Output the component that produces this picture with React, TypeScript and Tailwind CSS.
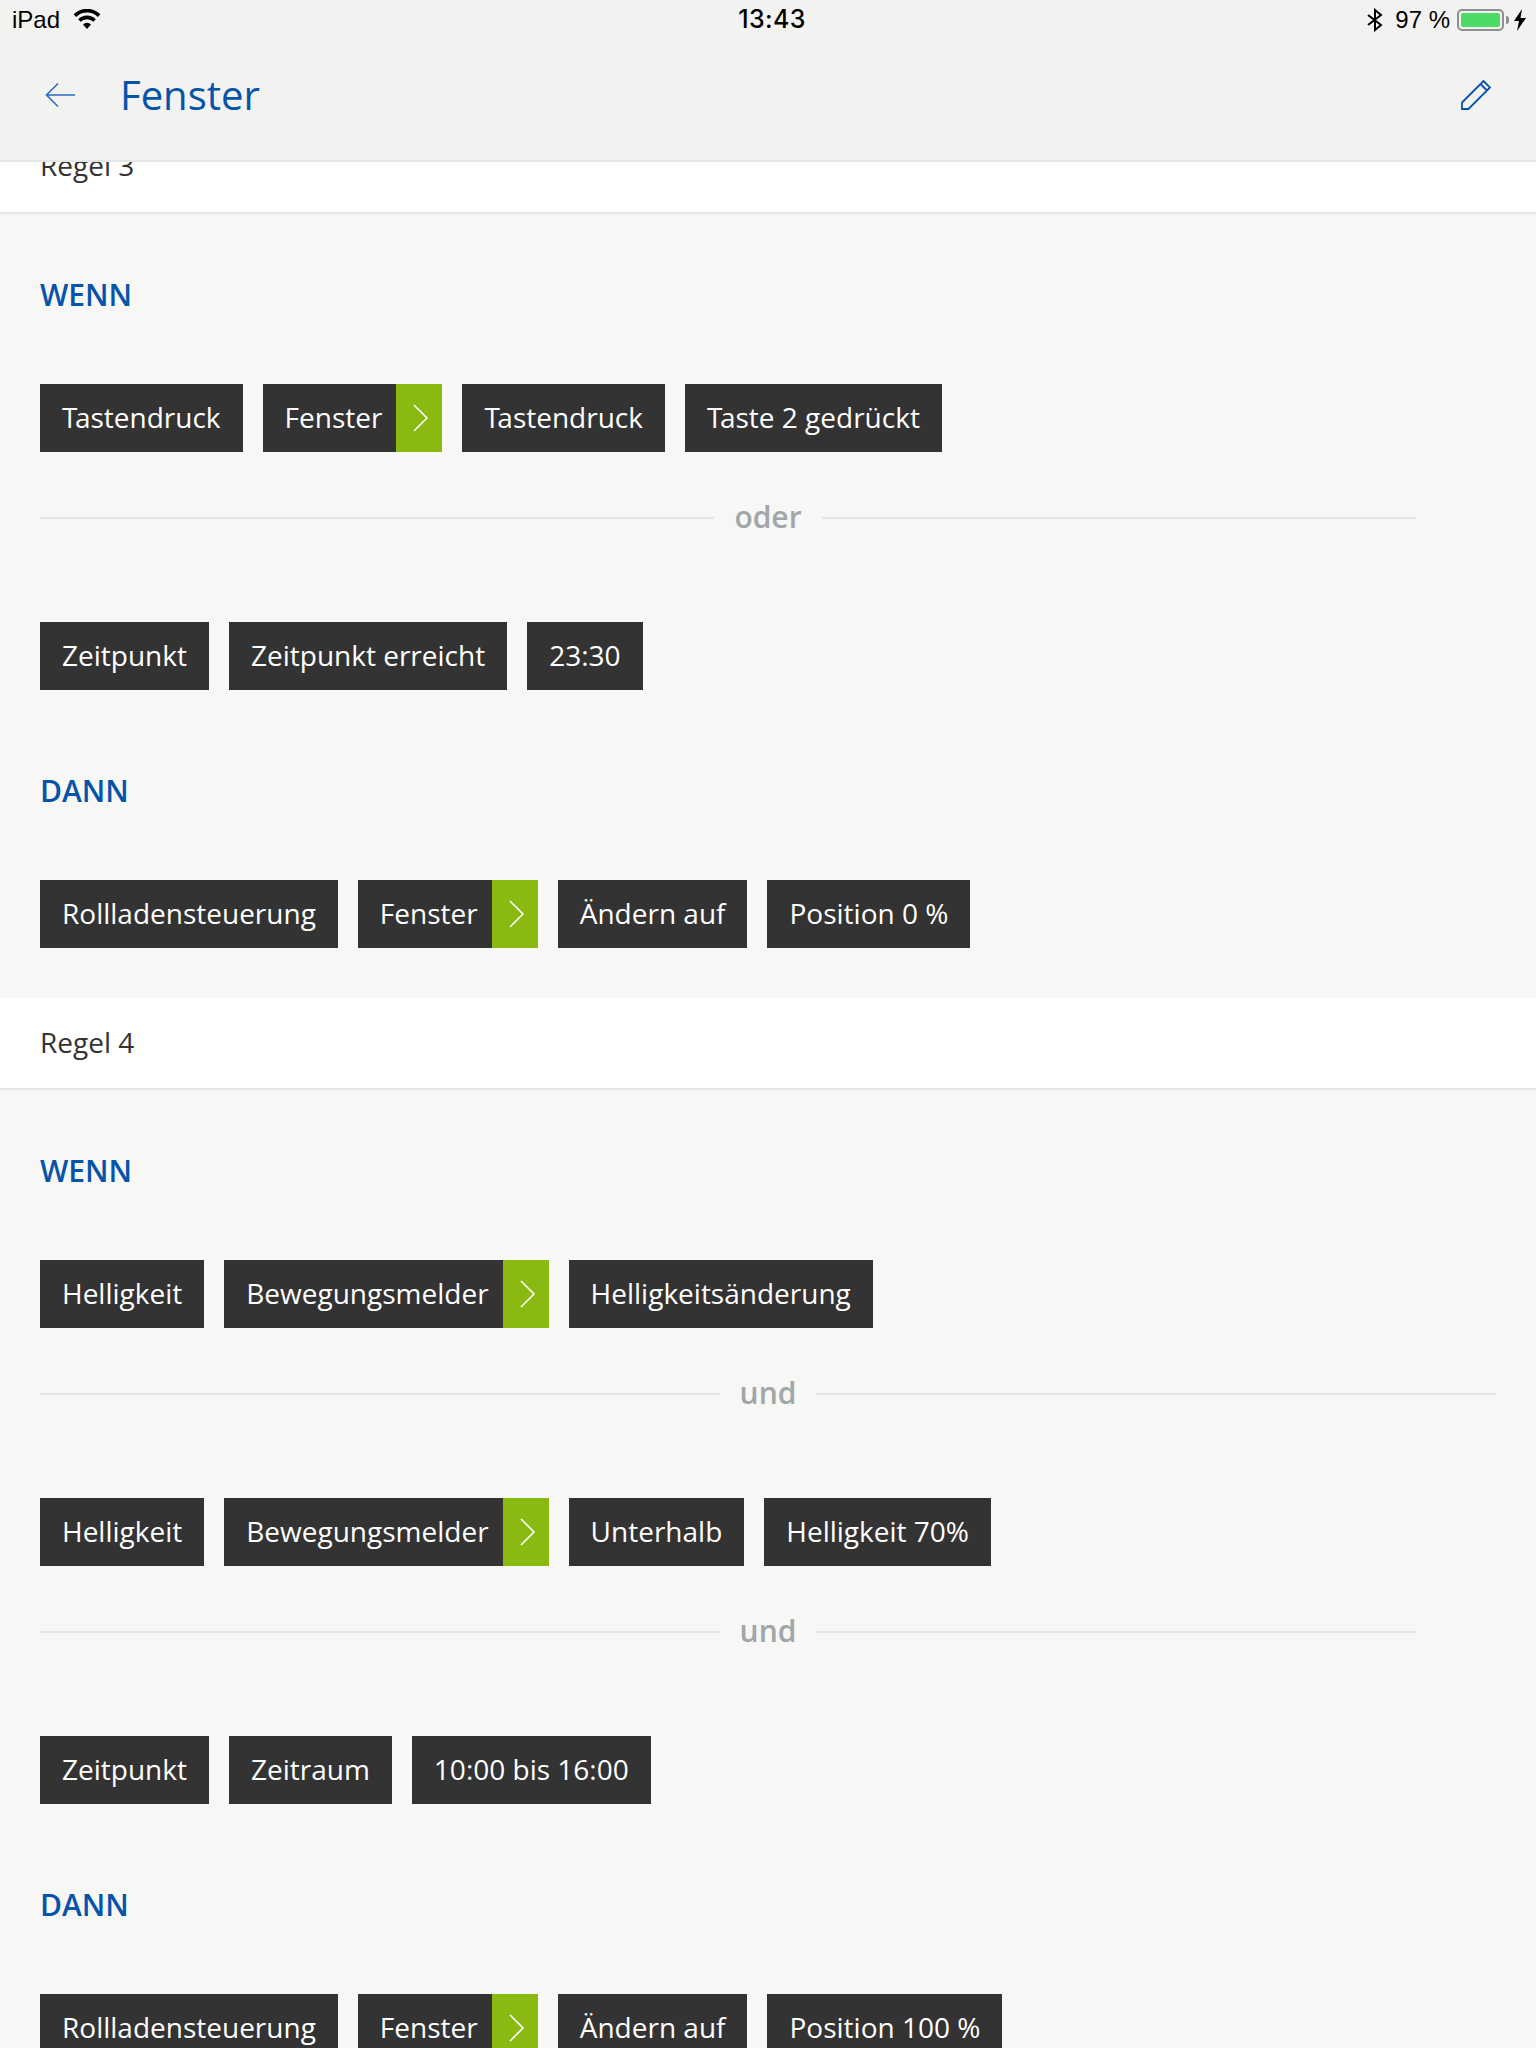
type ChipData = { label: string; arrow?: boolean };

// the installed font has no T-a kerning, so tighten the T by hand
function ChipLabel({ label }: { label: string }) {
  if (!label.startsWith('Ta')) return <>{label}</>;
  return (
    <>
      <span className="tracking-[-2.5px]">T</span>
      {label.slice(1)}
    </>
  );
}

function Chip({ label, arrow }: ChipData) {
  return (
    <div className="flex h-[68px] items-stretch bg-[#333333] text-[28px] text-white">
      <span className={arrow ? 'flex items-center pb-[2px] pl-[22px] pr-[14px]' : 'flex items-center px-[22px] pb-[2px]'}>
        <span>
          <ChipLabel label={label} />
        </span>
      </span>
      {arrow && (
        <span className="flex w-[46px] items-center bg-[#8aba12] pl-[17px]">
          <svg width="16" height="28" viewBox="0 0 16 28" fill="none" stroke="white" strokeWidth="1.6">
            <path d="M1 1l13 13L1 27" />
          </svg>
        </span>
      )}
    </div>
  );
}

function ChipRow({ chips, className }: { chips: ChipData[]; className: string }) {
  return (
    <div className={`flex gap-5 ${className}`}>
      {chips.map((c, i) => (
        <Chip key={i} {...c} />
      ))}
    </div>
  );
}

function Divider({ label, short, className }: { label: string; short?: boolean; className: string }) {
  return (
    <div className={`grid grid-cols-[1fr_auto_1fr] items-center gap-5 ${className}`}>
      <div className="mt-0.5 h-0.5 bg-[#e6e6e4]" />
      <span className="text-[30px] leading-[40px] font-semibold text-[#a1a6a9]">{label}</span>
      <div className={short ? 'mr-20 mt-0.5 h-0.5 bg-[#e6e6e4]' : 'mt-0.5 h-0.5 bg-[#e6e6e4]'} />
    </div>
  );
}

function Heading({ children, className }: { children: string; className: string }) {
  return <h3 className={`text-[30px] leading-[40px] font-semibold text-[#0653aa] ${className}`}>{children}</h3>;
}

function RuleHeader({ title }: { title: string }) {
  return (
    <div className="flex h-[92px] shrink-0 items-center border-b-2 border-[#e6e6e4] bg-white px-10 pb-[2px] text-[28px] text-[#333333]">
      {title}
    </div>
  );
}

export default function App() {
  return (
    <div className="flex h-[2048px] w-[1536px] flex-col overflow-hidden bg-[#f7f7f5] font-['Open_Sans',sans-serif]">
      <header className="h-[162px] shrink-0 border-b-2 border-[#e6e6e4] bg-[#f2f2f0]">
        <div className="grid h-10 grid-cols-[1fr_auto_1fr] items-center pl-3 pr-[10px] font-['Liberation_Sans',sans-serif] text-[24px] text-black">
          <div className="flex items-center gap-[13px]">
            <span className="text-[24px]">iPad</span>
            <svg width="28" height="22" viewBox="0 0 28 22" fill="black">
              <path d="M14 20l-4-4.500a5.600 5.600 0 0 1 8 0z" />
              <path d="M7.600 12.800l-2.400-2.600a12.400 12.400 0 0 1 17.600 0l-2.400 2.600a9 9 0 0 0-12.800 0z" />
              <path d="M3.200 8L.6 5.300a19 19 0 0 1 26.800 0L24.800 8a15.400 15.400 0 0 0-21.600 0z" />
            </svg>
          </div>
          <span className="ml-[6px] font-['Inter',sans-serif] text-[25px] font-medium tracking-[0.4px]">13:43</span>
          <div className="flex items-center justify-end">
            <svg width="18" height="24" viewBox="0 0 18 24" fill="none" stroke="black" strokeWidth="2" className="mr-[11px]">
              <path d="M2 7l13 10-6 5V2l6 5L2 17" />
            </svg>
            <span className="mr-[7px] text-[24px]">97 %</span>
            <div className="flex h-[22px] w-[47px] items-center rounded-[5px] border-2 border-[#8f8f8f] p-[2px]">
              <div className="h-full w-full rounded-[2px] bg-[#4cd964]" />
            </div>
            <div className="ml-[2px] mr-[5px] h-2 w-[3px] rounded-r-full bg-[#8f8f8f]" />
            <svg width="12" height="22" viewBox="0 0 12 22" fill="black">
              <path d="M8 0L0 12h5l-2 10 9-13H6.500z" />
            </svg>
          </div>
        </div>
        <div className="flex h-[120px] items-center justify-between pb-[10px] pl-[45px] pr-[45px]">
          <div className="flex items-center gap-[45px]">
            <svg width="30" height="26" viewBox="0 0 30 26" fill="none" stroke="#2a6ebb" strokeWidth="1.600">
              <path d="M13 1.500L1.500 13 13 24.500M1.500 13H30" />
            </svg>
            <h1 className="text-[40px] leading-none text-[#0653aa]">Fenster</h1>
          </div>
          <svg width="30" height="30" viewBox="0 0 30 30" fill="none" stroke="#0653aa" strokeWidth="1.800">
            <path d="M1 22.500L22.500 1 29 7.500 7.500 29H1zM19.500 4l6.500 6.500" />
          </svg>
        </div>
      </header>

      <div className="h-[52px] shrink-0 overflow-hidden border-b-2 border-[#e6e6e4] bg-white px-10">
        <div className="-mt-[17px] text-[28px] leading-[40px] text-[#333333]">Regel 3</div>
      </div>

      <section className="h-[784px] shrink-0 px-10">
        <Heading className="mt-[61px]">WENN</Heading>
        <ChipRow
          className="mt-[69px]"
          chips={[{ label: 'Tastendruck' }, { label: 'Fenster', arrow: true }, { label: 'Tastendruck' }, { label: 'Taste 2 gedrückt' }]}
        />
        <Divider label="oder" short className="mt-[45px]" />
        <ChipRow
          className="mt-[85px]"
          chips={[{ label: 'Zeitpunkt' }, { label: 'Zeitpunkt erreicht' }, { label: '23:30' }]}
        />
        <Heading className="mt-[81px]">DANN</Heading>
        <ChipRow
          className="mt-[69px]"
          chips={[{ label: 'Rollladensteuerung' }, { label: 'Fenster', arrow: true }, { label: 'Ändern auf' }, { label: 'Position 0 %' }]}
        />
      </section>

      <RuleHeader title="Regel 4" />

      <section className="flex-1 px-10">
        <Heading className="mt-[61px]">WENN</Heading>
        <ChipRow
          className="mt-[69px]"
          chips={[{ label: 'Helligkeit' }, { label: 'Bewegungsmelder', arrow: true }, { label: 'Helligkeitsänderung' }]}
        />
        <Divider label="und" className="mt-[45px]" />
        <ChipRow
          className="mt-[85px]"
          chips={[{ label: 'Helligkeit' }, { label: 'Bewegungsmelder', arrow: true }, { label: 'Unterhalb' }, { label: 'Helligkeit 70%' }]}
        />
        <Divider label="und" short className="mt-[45px]" />
        <ChipRow
          className="mt-[85px]"
          chips={[{ label: 'Zeitpunkt' }, { label: 'Zeitraum' }, { label: '10:00 bis 16:00' }]}
        />
        <Heading className="mt-[81px]">DANN</Heading>
        <ChipRow
          className="mt-[69px]"
          chips={[{ label: 'Rollladensteuerung' }, { label: 'Fenster', arrow: true }, { label: 'Ändern auf' }, { label: 'Position 100 %' }]}
        />
      </section>
    </div>
  );
}
